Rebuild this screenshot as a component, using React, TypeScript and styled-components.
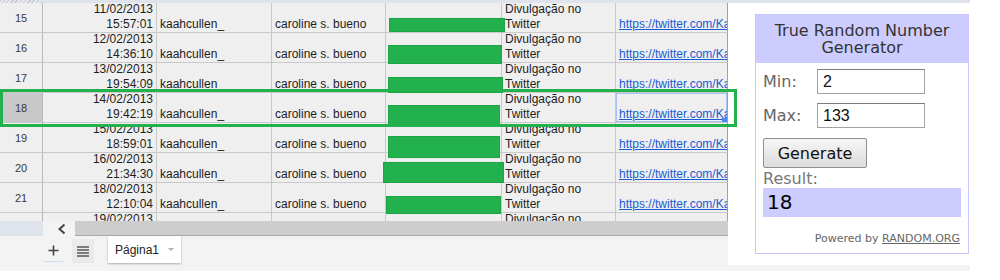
import React from "react";
import styled, { createGlobalStyle } from "styled-components";

const GlobalStyle = createGlobalStyle`
  html, body { margin: 0; padding: 0; background: #ffffff; }
  body { font-family: "Liberation Sans", Arial, sans-serif; }
`;

const Frame = styled.div`
  width: 970px;
  height: 271px;
  background: #f3f3f3;
  display: flex;
  flex-direction: column;
`;

const TopStrip = styled.div`
  height: 3px;
  flex-shrink: 0;
  display: flex;
  background: #dfe4ec;
`;

const TopCorner = styled.div`
  width: 42px;
  background: repeating-linear-gradient(135deg, #c4c8cf 0 1px, #e4e7ec 1px 3px);
`;

const Body = styled.div`
  display: flex;
  align-items: flex-start;
`;

const LeftCol = styled.div`
  width: 728px;
  display: flex;
  flex-direction: column;
`;

const Sheet = styled.div`
  position: relative;
  height: 218px;
`;

const Rows = styled.div`
  height: 218px;
  overflow: hidden;
`;

const Row = styled.div`
  display: grid;
  grid-template-columns: 43px 114px 115px 114px 116px 114px 112px;
  height: 30px;
`;

const Cell = styled.div<{ $align?: "left" | "right"; $last?: boolean; $selected?: boolean }>`
  box-sizing: border-box;
  position: relative;
  background: #efefef;
  border-right: 1px solid ${(p) => (p.$last ? "#a0a0a0" : "#c9c9c9")};
  border-bottom: 1px solid #c9c9c9;
  display: flex;
  flex-direction: column;
  justify-content: flex-end;
  align-items: ${(p) => (p.$align === "right" ? "flex-end" : "flex-start")};
  padding: 0 3px;
  font-size: 12px;
  line-height: 15px;
  color: #1e1e1e;
  white-space: nowrap;
  overflow: hidden;
  box-shadow: ${(p) => (p.$selected ? "inset 0 0 0 1px #a9c4f3" : "none")};

  &::after {
    content: "";
    display: ${(p) => (p.$selected ? "block" : "none")};
    position: absolute;
    right: 0;
    bottom: 0;
    width: 5px;
    height: 4px;
    background: #4a89f3;
  }
`;

const RowHead = styled.div<{ $active?: boolean }>`
  box-sizing: border-box;
  background: ${(p) => (p.$active ? "#c8c8c8" : "#efefef")};
  border-right: 1px solid #b9b9b9;
  border-bottom: 1px solid #c9c9c9;
  display: flex;
  align-items: center;
  justify-content: center;
  font-size: 11px;
  color: #3a3a3a;
`;

const Line = styled.span`
  display: block;
`;

const Link = styled.span`
  display: block;
  color: #1a5bd1;
  text-decoration: underline;
`;

const Redaction = styled.div`
  position: absolute;
  box-sizing: border-box;
  background: #22b14c;
  border: 1px solid #1ca545;
  z-index: 2;
`;

const Highlight = styled.div`
  position: absolute;
  left: 0;
  top: 86px;
  width: 737px;
  height: 38px;
  box-sizing: border-box;
  border: 3px solid #22b14c;
  z-index: 3;
`;

const ScrollRow = styled.div`
  height: 15px;
  display: flex;
`;

const ScrollCorner = styled.div`
  width: 43px;
  background: #dfe4ec;
`;

const ScrollArrow = styled.div`
  width: 32px;
  box-sizing: border-box;
  padding-left: 6px;
  display: flex;
  align-items: center;
  justify-content: center;
  background: #f3f3f3;
`;

const ScrollTrack = styled.div`
  flex: 1;
  box-sizing: border-box;
  background: #cdcdcd;
  border-bottom: 1px solid #a8a8a8;
`;

const TabBar = styled.div`
  height: 35px;
  display: flex;
  align-items: flex-start;
  padding-left: 43px;
`;

const PlusButton = styled.div`
  margin-top: 3px;
  width: 20px;
  height: 22px;
  border-bottom: 1px solid #cfdcf2;
  display: flex;
  align-items: center;
  justify-content: center;
`;

const ListButton = styled.div`
  margin-top: 3px;
  margin-left: 9px;
  width: 22px;
  height: 24px;
  background: #eaeaea;
  display: flex;
  align-items: center;
  justify-content: center;
`;

const Tab = styled.div`
  margin-left: 14px;
  width: 73px;
  height: 27px;
  box-sizing: border-box;
  background: #ffffff;
  box-shadow: 0 1px 2px rgba(0, 0, 0, 0.3);
  display: flex;
  align-items: center;
  padding-left: 7px;
  font-size: 12px;
  color: #222;
`;

const TabArrow = styled.span`
  margin-left: 9px;
  width: 0;
  height: 0;
  border-left: 3px solid transparent;
  border-right: 3px solid transparent;
  border-top: 3px solid #b0b0b0;
`;

const Panel = styled.div`
  width: 242px;
  height: 262px;
  box-sizing: border-box;
  background: #ffffff;
  padding: 11px 0 0 27px;
`;

const Widget = styled.div`
  width: 214px;
  box-sizing: border-box;
  border: 1px solid #c6c6ff;
  font-family: "DejaVu Sans", Verdana, sans-serif;
`;

const WidgetHeader = styled.div`
  background: #ccccff;
  padding: 7px 0;
  text-align: center;
  font-size: 16px;
  line-height: 17px;
  color: #333333;
`;

const WidgetBody = styled.div`
  padding: 0 7px 8px;
`;

const FieldRow = styled.div<{ $first?: boolean }>`
  display: flex;
  align-items: center;
  margin-top: ${(p) => (p.$first ? "6px" : "9px")};
`;

const FieldLabel = styled.span`
  width: 54px;
  flex-shrink: 0;
  font-size: 16px;
  color: #666666;
`;

const FieldInput = styled.input`
  width: 108px;
  height: 25px;
  box-sizing: border-box;
  border: 1px solid #a3a3a3;
  border-top-color: #7a7a7a;
  padding: 0 0 0 5px;
  margin: 0;
  font-family: "Liberation Sans", Arial, sans-serif;
  font-size: 16px;
  color: #111;
  outline: none;
`;

const GenerateButton = styled.button`
  display: block;
  margin-top: 10px;
  width: 104px;
  height: 30px;
  padding: 0;
  box-sizing: border-box;
  border: 1px solid #8e8e8e;
  border-radius: 2px;
  background: linear-gradient(#f6f6f6, #dcdcdc);
  font-family: "DejaVu Sans", Verdana, sans-serif;
  font-size: 16px;
  color: #111;
`;

const ResultLabel = styled.div`
  margin-top: 1px;
  font-size: 16px;
  line-height: 19px;
  color: #777777;
`;

const ResultBox = styled.div`
  height: 29px;
  background: #ccccff;
  padding-left: 4px;
  font-size: 20px;
  line-height: 29px;
  color: #000;
`;

const Powered = styled.div`
  margin-top: 15px;
  text-align: right;
  font-size: 11px;
  line-height: 13px;
  color: #666666;
  padding-right: 1px;

  u {
    color: #666666;
  }
`;

type RowData = { n: number; date: string; time: string };

const rows: RowData[] = [
  { n: 15, date: "11/02/2013", time: "15:57:01" },
  { n: 16, date: "12/02/2013", time: "14:36:10" },
  { n: 17, date: "13/02/2013", time: "19:54:09" },
  { n: 18, date: "14/02/2013", time: "19:42:19" },
  { n: 19, date: "15/02/2013", time: "18:59:01" },
  { n: 20, date: "16/02/2013", time: "21:34:30" },
  { n: 21, date: "18/02/2013", time: "12:10:04" },
  { n: 22, date: "19/02/2013", time: "20:11:45" },
];

const bars = [
  { left: 389, top: 15, width: 116, height: 14 },
  { left: 388, top: 42, width: 114, height: 19 },
  { left: 388, top: 74, width: 115, height: 16 },
  { left: 388, top: 102, width: 112, height: 20 },
  { left: 388, top: 133, width: 112, height: 22 },
  { left: 383, top: 159, width: 121, height: 21 },
  { left: 386, top: 193, width: 115, height: 18 },
];

export default function App() {
  return (
    <>
      <GlobalStyle />
      <Frame>
        <TopStrip>
          <TopCorner />
        </TopStrip>
        <Body>
          <LeftCol>
            <Sheet>
              <Rows>
                {rows.map((r) => (
                  <Row key={r.n}>
                    <RowHead $active={r.n === 18}>{r.n}</RowHead>
                    <Cell $align="right">
                      <Line>{r.date}</Line>
                      <Line>{r.time}</Line>
                    </Cell>
                    <Cell>
                      <Line>kaahcullen_</Line>
                    </Cell>
                    <Cell>
                      <Line>caroline s. bueno</Line>
                    </Cell>
                    <Cell />
                    <Cell>
                      <Line>Divulgação no</Line>
                      <Line>Twitter</Line>
                    </Cell>
                    <Cell $last $selected={r.n === 18}>
                      <Link>https://twitter.com/Kaahcullen_/status</Link>
                    </Cell>
                  </Row>
                ))}
              </Rows>
              {bars.map((b, i) => (
                <Redaction
                  key={i}
                  style={{ left: b.left, top: b.top, width: b.width, height: b.height }}
                />
              ))}
              <Highlight />
            </Sheet>
            <ScrollRow>
              <ScrollCorner />
              <ScrollArrow>
                <svg width="10" height="12" viewBox="0 0 10 12">
                  <polyline points="7.5,1.5 2.5,6 7.5,10.5" fill="none" stroke="#444" strokeWidth="2" />
                </svg>
              </ScrollArrow>
              <ScrollTrack />
            </ScrollRow>
            <TabBar>
              <PlusButton>
                <svg width="11" height="11" viewBox="0 0 11 11">
                  <path d="M5.5 0.5v10M0.5 5.5h10" stroke="#444" strokeWidth="1.6" />
                </svg>
              </PlusButton>
              <ListButton>
                <svg width="12" height="11" viewBox="0 0 12 11">
                  <path d="M0 1h12M0 4h12M0 7h12M0 10h12" stroke="#555" strokeWidth="1.4" />
                </svg>
              </ListButton>
              <Tab>
                Página1
                <TabArrow />
              </Tab>
            </TabBar>
          </LeftCol>
          <Panel>
            <Widget>
              <WidgetHeader>
                True Random Number
                <br />
                Generator
              </WidgetHeader>
              <WidgetBody>
                <FieldRow $first>
                  <FieldLabel>Min:</FieldLabel>
                  <FieldInput defaultValue="2" readOnly />
                </FieldRow>
                <FieldRow>
                  <FieldLabel>Max:</FieldLabel>
                  <FieldInput defaultValue="133" readOnly />
                </FieldRow>
                <GenerateButton>Generate</GenerateButton>
                <ResultLabel>Result:</ResultLabel>
                <ResultBox>18</ResultBox>
                <Powered>
                  Powered by <u>RANDOM.ORG</u>
                </Powered>
              </WidgetBody>
            </Widget>
          </Panel>
        </Body>
      </Frame>
    </>
  );
}
